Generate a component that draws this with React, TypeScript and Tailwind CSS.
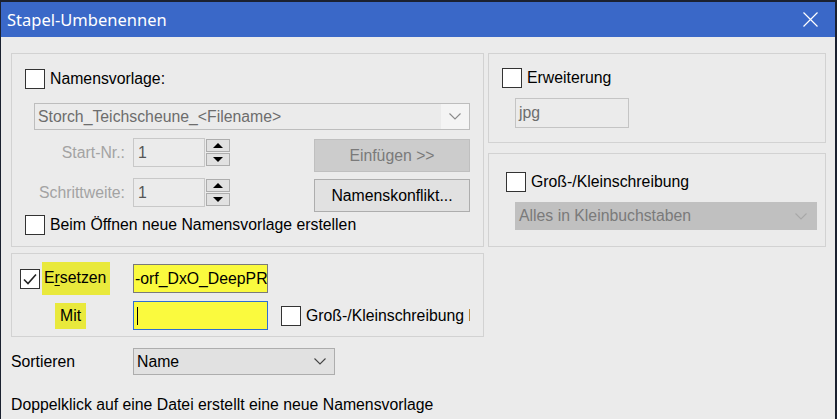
import React from "react";

const F = { fontFamily: '"Liberation Sans", Arial, sans-serif' };

function Box({ checked = false }: { checked?: boolean }) {
  return (
    <div className="w-[20px] h-[20px] shrink-0 bg-white border border-[#333333] flex items-center justify-center">
      {checked && (
        <svg width="16" height="16" viewBox="0 0 16 16">
          <path d="M2 8.5 L6 12.5 L14 3.5" fill="none" stroke="#222" strokeWidth="1.6" />
        </svg>
      )}
    </div>
  );
}

function Chevron({ color = "#6d6d6d" }: { color?: string }) {
  return (
    <svg width="12" height="7" viewBox="0 0 12 7">
      <path d="M0.5 0.5 L6 6 L11.5 0.5" fill="none" stroke={color} strokeWidth="1.1" />
    </svg>
  );
}

function Spinner() {
  return (
    <div className="ml-[1px] mt-[1px] w-[24px] h-[27px] flex flex-col gap-[1px]">
      <div className="h-[13px] border border-[#adadad] bg-[#e1e1e1] flex items-center justify-center">
        <svg width="10" height="5" viewBox="0 0 10 5"><path d="M0 5 L5 0 L10 5 Z" fill="#000" /></svg>
      </div>
      <div className="h-[13px] border border-[#adadad] bg-[#e1e1e1] flex items-center justify-center">
        <svg width="10" height="5" viewBox="0 0 10 5"><path d="M0 0 L10 0 L5 5 Z" fill="#000" /></svg>
      </div>
    </div>
  );
}

function SpinRow({ label, className = "" }: { label: string; className?: string }) {
  return (
    <div className={"flex items-start " + className}>
      <div className="w-[121px] h-[29px] pr-[8px] flex items-center justify-end text-[#a3a3a3]">{label}</div>
      <div className="w-[72px] h-[29px] border border-[#c8c8c8] bg-[#ebebeb] flex items-center pl-[4px] text-[#555]">1</div>
      <Spinner />
    </div>
  );
}

export default function App() {
  return (
    <div className="w-[837px] h-[419px] bg-[#1b2130] overflow-hidden text-[15.8px] leading-[18px] text-black" style={F}>
      <div className="ml-[1px] mt-[2px] w-[834px] h-[417px] bg-[#ebebeb] flex flex-col">
        {/* title bar */}
        <div className="h-[35px] bg-[#3a68c8] flex items-center justify-between pl-[6px] pr-[17px] text-white">
          <span className="text-[16.5px]" style={{ fontFamily: '"Noto Sans", "Open Sans", sans-serif' }}>Stapel-Umbenennen</span>
          <svg width="15" height="15" viewBox="0 0 15 15">
            <path d="M0.5 0.5 L14.5 14.5 M14.5 0.5 L0.5 14.5" stroke="#fff" strokeWidth="1.2" />
          </svg>
        </div>

        {/* body */}
        <div className="pt-[16px] pl-[10px] flex flex-col">
          <div className="flex gap-[4px]">
            {/* group 1 */}
            <div className="w-[473px] h-[194px] border border-[#d2d2d2] flex flex-col">
              <div className="mt-[15px] ml-[13px] flex items-center gap-[5px]">
                <Box />
                <span>Namensvorlage:</span>
              </div>
              <div className="mt-[14px] ml-[22px] w-[436px] h-[27px] border border-[#bdbdbd] flex">
                <div className="flex-1 bg-[#ebebeb] flex items-center pl-[3px] text-[#6d6d6d]">Storch_Teichscheune_&lt;Filename&gt;</div>
                <div className="w-[28px] bg-[#f4f4f4] flex items-center justify-center">
                  <Chevron color="#8a8a8a" />
                </div>
              </div>
              <div className="mt-[8px] flex">
                <div className="w-[302px] flex flex-col">
                  <SpinRow label="Start-Nr.:" />
                  <SpinRow label="Schrittweite:" className="mt-[11px]" />
                </div>
                <div className="flex flex-col gap-[7px] mt-[1px]">
                  <div className="w-[156px] h-[33px] border border-[#bfbfbf] bg-[#cccccc] flex items-center justify-center text-[#7a7a7a]">Einfügen &gt;&gt;</div>
                  <div className="w-[156px] h-[33px] border border-[#adadad] bg-[#e1e1e1] flex items-center justify-center">Namenskonflikt...</div>
                </div>
              </div>
              <div className="mt-[3px] ml-[13px] flex items-center gap-[5px]">
                <Box />
                <span>Beim Öffnen neue Namensvorlage erstellen</span>
              </div>
            </div>

            {/* right column */}
            <div className="flex flex-col gap-[10px]">
              <div className="w-[338px] h-[90px] border border-[#d2d2d2] flex flex-col">
                <div className="mt-[14px] ml-[13px] flex items-center gap-[5px]">
                  <Box />
                  <span>Erweiterung</span>
                </div>
                <div className="mt-[10px] ml-[26px] w-[114px] h-[30px] border border-[#c4c4c4] bg-[#ebebeb] flex items-center pl-[3px] text-[#6d6d6d]">jpg</div>
              </div>
              <div className="w-[338px] h-[94px] border border-[#d2d2d2] flex flex-col">
                <div className="mt-[18px] ml-[17px] flex items-center gap-[5px]">
                  <Box />
                  <span>Groß-/Kleinschreibung</span>
                </div>
                <div className="mt-[10px] ml-[26px] w-[302px] h-[28px] bg-[#c0c0c0] border border-[#c0c0c0] flex items-center justify-between pl-[3px] pr-[9px] text-[#7a7a7a]">
                  <span>Alles in Kleinbuchstaben</span>
                  <Chevron color="#a8a8a8" />
                </div>
              </div>
            </div>
          </div>

          {/* group 4 */}
          <div className="mt-[6px] w-[473px] h-[84px] border border-[#d2d2d2] flex flex-col">
            <div className="mt-[8px] flex items-center">
              <div className="w-[121px] flex items-center">
                <div className="ml-[8px]"><Box checked /></div>
                <span className="ml-[2px] pl-[2px] pr-[4px] pt-[7px] pb-[8px] bg-[#e9e93c]">
                  E<span className="underline underline-offset-2">r</span>setzen
                </span>
              </div>
              <div className="w-[135px] h-[29px] border border-[#7a7a7a] bg-[#fafa3e] overflow-hidden flex items-center pl-[1px] whitespace-nowrap">-orf_DxO_DeepPR</div>
            </div>
            <div className="mt-[6px] flex items-center">
              <div className="w-[121px] flex items-center">
                <span className="ml-[43px] px-[5px] py-[4px] bg-[#e9e93c]">Mit</span>
              </div>
              <div className="w-[135px] h-[29px] border border-[#2f6fd2] bg-[#fafa3e] flex items-center pl-[3px]">
                <div className="w-[1px] h-[18px] bg-black" />
              </div>
              <div className="ml-[13px] flex items-center gap-[5px] w-[189px] overflow-hidden whitespace-nowrap">
                <Box />
                <span>Groß-/Kleinschreibung beachten</span>
              </div>
            </div>
          </div>

          {/* Sortieren */}
          <div className="mt-[11px] flex items-center">
            <div className="w-[122px]">Sortieren</div>
            <div className="w-[202px] h-[27px] border border-[#adadad] bg-[#e1e1e1] flex items-center justify-between pl-[3px] pr-[8px]">
              <span>Name</span>
              <Chevron color="#444" />
            </div>
          </div>

          <div className="mt-[21px]">Doppelklick auf eine Datei erstellt eine neue Namensvorlage</div>
        </div>
      </div>
    </div>
  );
}
